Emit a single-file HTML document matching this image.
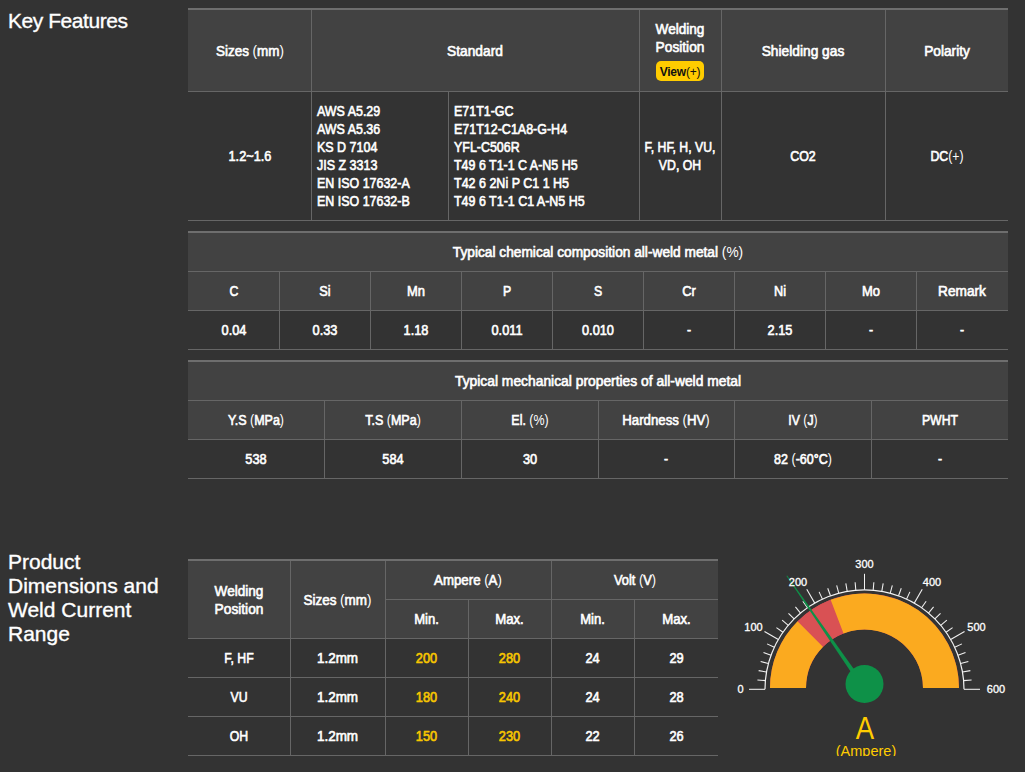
<!DOCTYPE html>
<html><head><meta charset="utf-8"><title>Key Features</title>
<style>
html,body{margin:0;padding:0;}
body{width:1025px;height:772px;background:#333333;position:relative;overflow:hidden;font-family:"Liberation Sans",sans-serif;}
.r{position:absolute;}
.t{position:absolute;white-space:nowrap;}
.lt{-webkit-text-stroke:0;}
.badge{background:#ffcc00;border-radius:5px;color:#111;font-weight:bold;font-size:12px;line-height:20px;text-align:center;}
</style></head><body>
<div class="t" style="left:8.00px;top:10.22px;font-size:21px;line-height:21px;font-weight:normal;color:#ffffff;letter-spacing:-0.45px;-webkit-text-stroke:0.35px #fff;">Key Features</div><div class="t" style="left:8.00px;top:550.72px;font-size:21px;line-height:21px;font-weight:normal;color:#ffffff;-webkit-text-stroke:0.35px #fff;">Product</div><div class="t" style="left:8.00px;top:574.72px;font-size:21px;line-height:21px;font-weight:normal;color:#ffffff;-webkit-text-stroke:0.35px #fff;">Dimensions and</div><div class="t" style="left:8.00px;top:598.72px;font-size:21px;line-height:21px;font-weight:normal;color:#ffffff;-webkit-text-stroke:0.35px #fff;">Weld Current</div><div class="t" style="left:8.00px;top:622.72px;font-size:21px;line-height:21px;font-weight:normal;color:#ffffff;-webkit-text-stroke:0.35px #fff;">Range</div><div class="r" style="left:188px;top:8px;width:820px;height:83px;background:#424242"></div><div class="r" style="left:188px;top:8px;width:820px;height:2px;background:#6e6e6e"></div><div class="r" style="left:188px;top:91px;width:820px;height:1px;background:#666666"></div><div class="r" style="left:188px;top:220px;width:820px;height:1px;background:#666666"></div><div class="r" style="left:311px;top:10px;width:1px;height:210px;background:#666666"></div><div class="r" style="left:639px;top:10px;width:1px;height:210px;background:#666666"></div><div class="r" style="left:721px;top:10px;width:1px;height:210px;background:#666666"></div><div class="r" style="left:885px;top:10px;width:1px;height:210px;background:#666666"></div><div class="r" style="left:448px;top:92px;width:1px;height:128px;background:#666666"></div><div class="t" style="left:189.50px;width:120px;text-align:center;top:45.27px;font-size:13.5px;line-height:13.5px;font-weight:normal;color:#ffffff;-webkit-text-stroke:0.6px #ffffff;transform:scale(0.9980,1.04);transform-origin:50% 11.43px;">Sizes <span class="lt">(</span>mm<span class="lt">)</span></div><div class="t" style="left:325.00px;width:300px;text-align:center;top:45.27px;font-size:13.5px;line-height:13.5px;font-weight:normal;color:#ffffff;-webkit-text-stroke:0.6px #ffffff;transform:scale(1.0189,1.04);transform-origin:50% 11.43px;">Standard</div><div class="t" style="left:640.00px;width:80px;text-align:center;top:22.77px;font-size:13.5px;line-height:13.5px;font-weight:normal;color:#ffffff;-webkit-text-stroke:0.6px #ffffff;transform:scale(1.0061,1.04);transform-origin:50% 11.43px;">Welding</div><div class="t" style="left:640.00px;width:80px;text-align:center;top:40.77px;font-size:13.5px;line-height:13.5px;font-weight:normal;color:#ffffff;-webkit-text-stroke:0.6px #ffffff;transform:scale(1.0158,1.04);transform-origin:50% 11.43px;">Position</div><div class="r badge" style="left:656px;top:61px;width:48px;height:20px;"><span style="position:relative;top:1px;letter-spacing:-0.2px">View<span style="font-weight:normal">(+)</span></span></div><div class="t" style="left:723.00px;width:160px;text-align:center;top:45.27px;font-size:13.5px;line-height:13.5px;font-weight:normal;color:#ffffff;-webkit-text-stroke:0.6px #ffffff;transform:scale(1.0193,1.04);transform-origin:50% 11.43px;">Shielding gas</div><div class="t" style="left:886.50px;width:120px;text-align:center;top:45.27px;font-size:13.5px;line-height:13.5px;font-weight:normal;color:#ffffff;-webkit-text-stroke:0.6px #ffffff;transform:scale(1.0142,1.04);transform-origin:50% 11.43px;">Polarity</div><div class="t" style="left:189.50px;width:120px;text-align:center;top:150.27px;font-size:13.5px;line-height:13.5px;font-weight:normal;color:#ffffff;-webkit-text-stroke:0.6px #ffffff;transform:scale(0.9453,1.04);transform-origin:50% 11.43px;">1.2~1.6</div><div class="t" style="left:317.00px;top:104.97px;font-size:13.5px;line-height:13.5px;font-weight:normal;color:#ffffff;-webkit-text-stroke:0.6px #ffffff;transform:scale(0.9221,1.04);transform-origin:0 11.43px;">AWS A5.29</div><div class="t" style="left:317.00px;top:122.97px;font-size:13.5px;line-height:13.5px;font-weight:normal;color:#ffffff;-webkit-text-stroke:0.6px #ffffff;transform:scale(0.9221,1.04);transform-origin:0 11.43px;">AWS A5.36</div><div class="t" style="left:317.00px;top:140.97px;font-size:13.5px;line-height:13.5px;font-weight:normal;color:#ffffff;-webkit-text-stroke:0.6px #ffffff;transform:scale(0.9244,1.04);transform-origin:0 11.43px;">KS D 7104</div><div class="t" style="left:317.00px;top:158.97px;font-size:13.5px;line-height:13.5px;font-weight:normal;color:#ffffff;-webkit-text-stroke:0.6px #ffffff;transform:scale(0.9244,1.04);transform-origin:0 11.43px;">JIS Z 3313</div><div class="t" style="left:317.00px;top:176.97px;font-size:13.5px;line-height:13.5px;font-weight:normal;color:#ffffff;-webkit-text-stroke:0.6px #ffffff;transform:scale(0.9217,1.04);transform-origin:0 11.43px;">EN ISO 17632-A</div><div class="t" style="left:317.00px;top:194.97px;font-size:13.5px;line-height:13.5px;font-weight:normal;color:#ffffff;-webkit-text-stroke:0.6px #ffffff;transform:scale(0.9217,1.04);transform-origin:0 11.43px;">EN ISO 17632-B</div><div class="t" style="left:453.80px;top:104.97px;font-size:13.5px;line-height:13.5px;font-weight:normal;color:#ffffff;-webkit-text-stroke:0.6px #ffffff;transform:scale(0.9216,1.04);transform-origin:0 11.43px;">E71T1-GC</div><div class="t" style="left:453.80px;top:122.97px;font-size:13.5px;line-height:13.5px;font-weight:normal;color:#ffffff;-webkit-text-stroke:0.6px #ffffff;transform:scale(0.9246,1.04);transform-origin:0 11.43px;">E71T12-C1A8-G-H4</div><div class="t" style="left:453.80px;top:140.97px;font-size:13.5px;line-height:13.5px;font-weight:normal;color:#ffffff;-webkit-text-stroke:0.6px #ffffff;transform:scale(0.9204,1.04);transform-origin:0 11.43px;">YFL-C506R</div><div class="t" style="left:453.80px;top:158.97px;font-size:13.5px;line-height:13.5px;font-weight:normal;color:#ffffff;-webkit-text-stroke:0.6px #ffffff;transform:scale(0.9216,1.04);transform-origin:0 11.43px;">T49 6 T1-1 C A-N5 H5</div><div class="t" style="left:453.80px;top:176.97px;font-size:13.5px;line-height:13.5px;font-weight:normal;color:#ffffff;-webkit-text-stroke:0.6px #ffffff;transform:scale(0.9255,1.04);transform-origin:0 11.43px;">T42 6 2Ni P C1 1 H5</div><div class="t" style="left:453.80px;top:194.97px;font-size:13.5px;line-height:13.5px;font-weight:normal;color:#ffffff;-webkit-text-stroke:0.6px #ffffff;transform:scale(0.9228,1.04);transform-origin:0 11.43px;">T49 6 T1-1 C1 A-N5 H5</div><div class="t" style="left:639.00px;width:82px;text-align:center;top:141.27px;font-size:13.5px;line-height:13.5px;font-weight:normal;color:#ffffff;-webkit-text-stroke:0.6px #ffffff;transform:scale(0.9074,1.04);transform-origin:50% 11.43px;">F, HF, H, VU,</div><div class="t" style="left:639.00px;width:82px;text-align:center;top:159.27px;font-size:13.5px;line-height:13.5px;font-weight:normal;color:#ffffff;-webkit-text-stroke:0.6px #ffffff;transform:scale(0.9081,1.04);transform-origin:50% 11.43px;">VD, OH</div><div class="t" style="left:723.00px;width:160px;text-align:center;top:150.27px;font-size:13.5px;line-height:13.5px;font-weight:normal;color:#ffffff;-webkit-text-stroke:0.6px #ffffff;transform:scale(0.9188,1.04);transform-origin:50% 11.43px;">CO2</div><div class="t" style="left:886.50px;width:120px;text-align:center;top:150.27px;font-size:13.5px;line-height:13.5px;font-weight:normal;color:#ffffff;-webkit-text-stroke:0.6px #ffffff;transform:scale(0.9089,1.04);transform-origin:50% 11.43px;">DC<span class="lt">(</span><span class="lt">+</span><span class="lt">)</span></div><div class="r" style="left:188px;top:231px;width:820px;height:79px;background:#424242"></div><div class="r" style="left:188px;top:231px;width:820px;height:2px;background:#6e6e6e"></div><div class="r" style="left:188px;top:271px;width:820px;height:1px;background:#666666"></div><div class="r" style="left:188px;top:310px;width:820px;height:1px;background:#666666"></div><div class="r" style="left:188px;top:349px;width:820px;height:1px;background:#666666"></div><div class="r" style="left:279px;top:272px;width:1px;height:77px;background:#666666"></div><div class="r" style="left:370px;top:272px;width:1px;height:77px;background:#666666"></div><div class="r" style="left:461px;top:272px;width:1px;height:77px;background:#666666"></div><div class="r" style="left:552px;top:272px;width:1px;height:77px;background:#666666"></div><div class="r" style="left:643px;top:272px;width:1px;height:77px;background:#666666"></div><div class="r" style="left:734px;top:272px;width:1px;height:77px;background:#666666"></div><div class="r" style="left:825px;top:272px;width:1px;height:77px;background:#666666"></div><div class="r" style="left:916px;top:272px;width:1px;height:77px;background:#666666"></div><div class="t" style="left:298.00px;width:600px;text-align:center;top:245.57px;font-size:13.5px;line-height:13.5px;font-weight:normal;color:#ffffff;-webkit-text-stroke:0.6px #ffffff;transform:scale(1.0157,1.04);transform-origin:50% 11.43px;">Typical chemical composition all-weld metal <span class="lt">(</span><span class="lt">%</span><span class="lt">)</span></div><div class="t" style="left:188.56px;width:90px;text-align:center;top:284.77px;font-size:13.5px;line-height:13.5px;font-weight:normal;color:#ffffff;-webkit-text-stroke:0.6px #ffffff;transform:scale(0.9089,1.04);transform-origin:50% 11.43px;">C</div><div class="t" style="left:188.56px;width:90px;text-align:center;top:323.77px;font-size:13.5px;line-height:13.5px;font-weight:normal;color:#ffffff;-webkit-text-stroke:0.6px #ffffff;transform:scale(0.9453,1.04);transform-origin:50% 11.43px;">0.04</div><div class="t" style="left:279.67px;width:90px;text-align:center;top:284.77px;font-size:13.5px;line-height:13.5px;font-weight:normal;color:#ffffff;-webkit-text-stroke:0.6px #ffffff;transform:scale(0.9418,1.04);transform-origin:50% 11.43px;">Si</div><div class="t" style="left:279.67px;width:90px;text-align:center;top:323.77px;font-size:13.5px;line-height:13.5px;font-weight:normal;color:#ffffff;-webkit-text-stroke:0.6px #ffffff;transform:scale(0.9453,1.04);transform-origin:50% 11.43px;">0.33</div><div class="t" style="left:370.78px;width:90px;text-align:center;top:284.77px;font-size:13.5px;line-height:13.5px;font-weight:normal;color:#ffffff;-webkit-text-stroke:0.6px #ffffff;transform:scale(0.9616,1.04);transform-origin:50% 11.43px;">Mn</div><div class="t" style="left:370.78px;width:90px;text-align:center;top:323.77px;font-size:13.5px;line-height:13.5px;font-weight:normal;color:#ffffff;-webkit-text-stroke:0.6px #ffffff;transform:scale(0.9453,1.04);transform-origin:50% 11.43px;">1.18</div><div class="t" style="left:461.89px;width:90px;text-align:center;top:284.77px;font-size:13.5px;line-height:13.5px;font-weight:normal;color:#ffffff;-webkit-text-stroke:0.6px #ffffff;transform:scale(0.9089,1.04);transform-origin:50% 11.43px;">P</div><div class="t" style="left:461.89px;width:90px;text-align:center;top:323.77px;font-size:13.5px;line-height:13.5px;font-weight:normal;color:#ffffff;-webkit-text-stroke:0.6px #ffffff;transform:scale(0.9453,1.04);transform-origin:50% 11.43px;">0.011</div><div class="t" style="left:553.00px;width:90px;text-align:center;top:284.77px;font-size:13.5px;line-height:13.5px;font-weight:normal;color:#ffffff;-webkit-text-stroke:0.6px #ffffff;transform:scale(0.9089,1.04);transform-origin:50% 11.43px;">S</div><div class="t" style="left:553.00px;width:90px;text-align:center;top:323.77px;font-size:13.5px;line-height:13.5px;font-weight:normal;color:#ffffff;-webkit-text-stroke:0.6px #ffffff;transform:scale(0.9453,1.04);transform-origin:50% 11.43px;">0.010</div><div class="t" style="left:644.11px;width:90px;text-align:center;top:284.77px;font-size:13.5px;line-height:13.5px;font-weight:normal;color:#ffffff;-webkit-text-stroke:0.6px #ffffff;transform:scale(0.9505,1.04);transform-origin:50% 11.43px;">Cr</div><div class="t" style="left:644.11px;width:90px;text-align:center;top:323.77px;font-size:13.5px;line-height:13.5px;font-weight:normal;color:#ffffff;-webkit-text-stroke:0.6px #ffffff;transform:scale(0.9089,1.04);transform-origin:50% 11.43px;">-</div><div class="t" style="left:735.22px;width:90px;text-align:center;top:284.77px;font-size:13.5px;line-height:13.5px;font-weight:normal;color:#ffffff;-webkit-text-stroke:0.6px #ffffff;transform:scale(0.9399,1.04);transform-origin:50% 11.43px;">Ni</div><div class="t" style="left:735.22px;width:90px;text-align:center;top:323.77px;font-size:13.5px;line-height:13.5px;font-weight:normal;color:#ffffff;-webkit-text-stroke:0.6px #ffffff;transform:scale(0.9453,1.04);transform-origin:50% 11.43px;">2.15</div><div class="t" style="left:826.33px;width:90px;text-align:center;top:284.77px;font-size:13.5px;line-height:13.5px;font-weight:normal;color:#ffffff;-webkit-text-stroke:0.6px #ffffff;transform:scale(0.9616,1.04);transform-origin:50% 11.43px;">Mo</div><div class="t" style="left:826.33px;width:90px;text-align:center;top:323.77px;font-size:13.5px;line-height:13.5px;font-weight:normal;color:#ffffff;-webkit-text-stroke:0.6px #ffffff;transform:scale(0.9089,1.04);transform-origin:50% 11.43px;">-</div><div class="t" style="left:917.44px;width:90px;text-align:center;top:284.77px;font-size:13.5px;line-height:13.5px;font-weight:normal;color:#ffffff;-webkit-text-stroke:0.6px #ffffff;transform:scale(1.0133,1.04);transform-origin:50% 11.43px;">Remark</div><div class="t" style="left:917.44px;width:90px;text-align:center;top:323.77px;font-size:13.5px;line-height:13.5px;font-weight:normal;color:#ffffff;-webkit-text-stroke:0.6px #ffffff;transform:scale(0.9089,1.04);transform-origin:50% 11.43px;">-</div><div class="r" style="left:188px;top:360px;width:820px;height:79px;background:#424242"></div><div class="r" style="left:188px;top:360px;width:820px;height:2px;background:#6e6e6e"></div><div class="r" style="left:188px;top:400px;width:820px;height:1px;background:#666666"></div><div class="r" style="left:188px;top:439px;width:820px;height:1px;background:#666666"></div><div class="r" style="left:188px;top:478px;width:820px;height:1px;background:#666666"></div><div class="r" style="left:324px;top:401px;width:1px;height:77px;background:#666666"></div><div class="r" style="left:461px;top:401px;width:1px;height:77px;background:#666666"></div><div class="r" style="left:598px;top:401px;width:1px;height:77px;background:#666666"></div><div class="r" style="left:734px;top:401px;width:1px;height:77px;background:#666666"></div><div class="r" style="left:871px;top:401px;width:1px;height:77px;background:#666666"></div><div class="t" style="left:298.00px;width:600px;text-align:center;top:375.27px;font-size:13.5px;line-height:13.5px;font-weight:normal;color:#ffffff;-webkit-text-stroke:0.6px #ffffff;transform:scale(1.0249,1.04);transform-origin:50% 11.43px;">Typical mechanical properties of all-weld metal</div><div class="t" style="left:188.33px;width:136px;text-align:center;top:413.77px;font-size:13.5px;line-height:13.5px;font-weight:normal;color:#ffffff;-webkit-text-stroke:0.6px #ffffff;transform:scale(0.9263,1.04);transform-origin:50% 11.43px;">Y.S <span class="lt">(</span>MPa<span class="lt">)</span></div><div class="t" style="left:188.33px;width:136px;text-align:center;top:452.77px;font-size:13.5px;line-height:13.5px;font-weight:normal;color:#ffffff;-webkit-text-stroke:0.6px #ffffff;transform:scale(0.9453,1.04);transform-origin:50% 11.43px;">538</div><div class="t" style="left:325.00px;width:136px;text-align:center;top:413.77px;font-size:13.5px;line-height:13.5px;font-weight:normal;color:#ffffff;-webkit-text-stroke:0.6px #ffffff;transform:scale(0.9265,1.04);transform-origin:50% 11.43px;">T.S <span class="lt">(</span>MPa<span class="lt">)</span></div><div class="t" style="left:325.00px;width:136px;text-align:center;top:452.77px;font-size:13.5px;line-height:13.5px;font-weight:normal;color:#ffffff;-webkit-text-stroke:0.6px #ffffff;transform:scale(0.9453,1.04);transform-origin:50% 11.43px;">584</div><div class="t" style="left:461.67px;width:136px;text-align:center;top:413.77px;font-size:13.5px;line-height:13.5px;font-weight:normal;color:#ffffff;-webkit-text-stroke:0.6px #ffffff;transform:scale(0.9210,1.04);transform-origin:50% 11.43px;">El. <span class="lt">(</span><span class="lt">%</span><span class="lt">)</span></div><div class="t" style="left:461.67px;width:136px;text-align:center;top:452.77px;font-size:13.5px;line-height:13.5px;font-weight:normal;color:#ffffff;-webkit-text-stroke:0.6px #ffffff;transform:scale(0.9453,1.04);transform-origin:50% 11.43px;">30</div><div class="t" style="left:598.33px;width:136px;text-align:center;top:413.77px;font-size:13.5px;line-height:13.5px;font-weight:normal;color:#ffffff;-webkit-text-stroke:0.6px #ffffff;transform:scale(0.9792,1.04);transform-origin:50% 11.43px;">Hardness <span class="lt">(</span>HV<span class="lt">)</span></div><div class="t" style="left:598.33px;width:136px;text-align:center;top:452.77px;font-size:13.5px;line-height:13.5px;font-weight:normal;color:#ffffff;-webkit-text-stroke:0.6px #ffffff;transform:scale(0.9089,1.04);transform-origin:50% 11.43px;">-</div><div class="t" style="left:735.00px;width:136px;text-align:center;top:413.77px;font-size:13.5px;line-height:13.5px;font-weight:normal;color:#ffffff;-webkit-text-stroke:0.6px #ffffff;transform:scale(0.9077,1.04);transform-origin:50% 11.43px;">IV <span class="lt">(</span>J<span class="lt">)</span></div><div class="t" style="left:735.00px;width:136px;text-align:center;top:452.77px;font-size:13.5px;line-height:13.5px;font-weight:normal;color:#ffffff;-webkit-text-stroke:0.6px #ffffff;transform:scale(0.9258,1.04);transform-origin:50% 11.43px;">82 <span class="lt">(</span>-60°C<span class="lt">)</span></div><div class="t" style="left:871.67px;width:136px;text-align:center;top:413.77px;font-size:13.5px;line-height:13.5px;font-weight:normal;color:#ffffff;-webkit-text-stroke:0.6px #ffffff;transform:scale(0.9089,1.04);transform-origin:50% 11.43px;">PWHT</div><div class="t" style="left:871.67px;width:136px;text-align:center;top:452.77px;font-size:13.5px;line-height:13.5px;font-weight:normal;color:#ffffff;-webkit-text-stroke:0.6px #ffffff;transform:scale(0.9089,1.04);transform-origin:50% 11.43px;">-</div><div class="r" style="left:188px;top:559px;width:530px;height:79px;background:#424242"></div><div class="r" style="left:188px;top:559px;width:530px;height:2px;background:#6e6e6e"></div><div class="r" style="left:385px;top:599px;width:333px;height:1px;background:#666666"></div><div class="r" style="left:188px;top:638px;width:530px;height:1px;background:#666666"></div><div class="r" style="left:188px;top:677px;width:530px;height:1px;background:#666666"></div><div class="r" style="left:188px;top:716px;width:530px;height:1px;background:#666666"></div><div class="r" style="left:188px;top:755px;width:530px;height:1px;background:#666666"></div><div class="r" style="left:290px;top:561px;width:1px;height:194px;background:#666666"></div><div class="r" style="left:385px;top:561px;width:1px;height:194px;background:#666666"></div><div class="r" style="left:551px;top:561px;width:1px;height:194px;background:#666666"></div><div class="r" style="left:468px;top:600px;width:1px;height:155px;background:#666666"></div><div class="r" style="left:634px;top:600px;width:1px;height:155px;background:#666666"></div><div class="t" style="left:189.00px;width:100px;text-align:center;top:585.07px;font-size:13.5px;line-height:13.5px;font-weight:normal;color:#ffffff;-webkit-text-stroke:0.6px #ffffff;transform:scale(1.0061,1.04);transform-origin:50% 11.43px;">Welding</div><div class="t" style="left:189.00px;width:100px;text-align:center;top:603.07px;font-size:13.5px;line-height:13.5px;font-weight:normal;color:#ffffff;-webkit-text-stroke:0.6px #ffffff;transform:scale(1.0158,1.04);transform-origin:50% 11.43px;">Position</div><div class="t" style="left:290.00px;width:95px;text-align:center;top:594.27px;font-size:13.5px;line-height:13.5px;font-weight:normal;color:#ffffff;-webkit-text-stroke:0.6px #ffffff;transform:scale(0.9980,1.04);transform-origin:50% 11.43px;">Sizes <span class="lt">(</span>mm<span class="lt">)</span></div><div class="t" style="left:385.00px;width:166px;text-align:center;top:574.27px;font-size:13.5px;line-height:13.5px;font-weight:normal;color:#ffffff;-webkit-text-stroke:0.6px #ffffff;transform:scale(0.9813,1.04);transform-origin:50% 11.43px;">Ampere <span class="lt">(</span>A<span class="lt">)</span></div><div class="t" style="left:551.50px;width:166px;text-align:center;top:574.27px;font-size:13.5px;line-height:13.5px;font-weight:normal;color:#ffffff;-webkit-text-stroke:0.6px #ffffff;transform:scale(0.9497,1.04);transform-origin:50% 11.43px;">Volt <span class="lt">(</span>V<span class="lt">)</span></div><div class="t" style="left:385.00px;width:83px;text-align:center;top:613.27px;font-size:13.5px;line-height:13.5px;font-weight:normal;color:#ffffff;-webkit-text-stroke:0.6px #ffffff;transform:scale(0.9685,1.04);transform-origin:50% 11.43px;">Min.</div><div class="t" style="left:468.00px;width:83px;text-align:center;top:613.27px;font-size:13.5px;line-height:13.5px;font-weight:normal;color:#ffffff;-webkit-text-stroke:0.6px #ffffff;transform:scale(0.9777,1.04);transform-origin:50% 11.43px;">Max.</div><div class="t" style="left:551.00px;width:83px;text-align:center;top:613.27px;font-size:13.5px;line-height:13.5px;font-weight:normal;color:#ffffff;-webkit-text-stroke:0.6px #ffffff;transform:scale(0.9685,1.04);transform-origin:50% 11.43px;">Min.</div><div class="t" style="left:634.50px;width:83px;text-align:center;top:613.27px;font-size:13.5px;line-height:13.5px;font-weight:normal;color:#ffffff;-webkit-text-stroke:0.6px #ffffff;transform:scale(0.9777,1.04);transform-origin:50% 11.43px;">Max.</div><div class="t" style="left:189.00px;width:100px;text-align:center;top:651.97px;font-size:13.5px;line-height:13.5px;font-weight:normal;color:#ffffff;-webkit-text-stroke:0.6px #ffffff;transform:scale(0.9077,1.04);transform-origin:50% 11.43px;">F, HF</div><div class="t" style="left:290.00px;width:95px;text-align:center;top:651.97px;font-size:13.5px;line-height:13.5px;font-weight:normal;color:#ffffff;-webkit-text-stroke:0.6px #ffffff;transform:scale(0.9972,1.04);transform-origin:50% 11.43px;">1.2mm</div><div class="t" style="left:385.00px;width:83px;text-align:center;top:651.97px;font-size:13.5px;line-height:13.5px;font-weight:normal;color:#f7c600;-webkit-text-stroke:0.6px #f7c600;transform:scale(0.9453,1.04);transform-origin:50% 11.43px;">200</div><div class="t" style="left:468.00px;width:83px;text-align:center;top:651.97px;font-size:13.5px;line-height:13.5px;font-weight:normal;color:#f7c600;-webkit-text-stroke:0.6px #f7c600;transform:scale(0.9453,1.04);transform-origin:50% 11.43px;">280</div><div class="t" style="left:551.00px;width:83px;text-align:center;top:651.97px;font-size:13.5px;line-height:13.5px;font-weight:normal;color:#ffffff;-webkit-text-stroke:0.6px #ffffff;transform:scale(0.9453,1.04);transform-origin:50% 11.43px;">24</div><div class="t" style="left:634.50px;width:83px;text-align:center;top:651.97px;font-size:13.5px;line-height:13.5px;font-weight:normal;color:#ffffff;-webkit-text-stroke:0.6px #ffffff;transform:scale(0.9453,1.04);transform-origin:50% 11.43px;">29</div><div class="t" style="left:189.00px;width:100px;text-align:center;top:690.97px;font-size:13.5px;line-height:13.5px;font-weight:normal;color:#ffffff;-webkit-text-stroke:0.6px #ffffff;transform:scale(0.9089,1.04);transform-origin:50% 11.43px;">VU</div><div class="t" style="left:290.00px;width:95px;text-align:center;top:690.97px;font-size:13.5px;line-height:13.5px;font-weight:normal;color:#ffffff;-webkit-text-stroke:0.6px #ffffff;transform:scale(0.9972,1.04);transform-origin:50% 11.43px;">1.2mm</div><div class="t" style="left:385.00px;width:83px;text-align:center;top:690.97px;font-size:13.5px;line-height:13.5px;font-weight:normal;color:#f7c600;-webkit-text-stroke:0.6px #f7c600;transform:scale(0.9453,1.04);transform-origin:50% 11.43px;">180</div><div class="t" style="left:468.00px;width:83px;text-align:center;top:690.97px;font-size:13.5px;line-height:13.5px;font-weight:normal;color:#f7c600;-webkit-text-stroke:0.6px #f7c600;transform:scale(0.9453,1.04);transform-origin:50% 11.43px;">240</div><div class="t" style="left:551.00px;width:83px;text-align:center;top:690.97px;font-size:13.5px;line-height:13.5px;font-weight:normal;color:#ffffff;-webkit-text-stroke:0.6px #ffffff;transform:scale(0.9453,1.04);transform-origin:50% 11.43px;">24</div><div class="t" style="left:634.50px;width:83px;text-align:center;top:690.97px;font-size:13.5px;line-height:13.5px;font-weight:normal;color:#ffffff;-webkit-text-stroke:0.6px #ffffff;transform:scale(0.9453,1.04);transform-origin:50% 11.43px;">28</div><div class="t" style="left:189.00px;width:100px;text-align:center;top:729.97px;font-size:13.5px;line-height:13.5px;font-weight:normal;color:#ffffff;-webkit-text-stroke:0.6px #ffffff;transform:scale(0.9089,1.04);transform-origin:50% 11.43px;">OH</div><div class="t" style="left:290.00px;width:95px;text-align:center;top:729.97px;font-size:13.5px;line-height:13.5px;font-weight:normal;color:#ffffff;-webkit-text-stroke:0.6px #ffffff;transform:scale(0.9972,1.04);transform-origin:50% 11.43px;">1.2mm</div><div class="t" style="left:385.00px;width:83px;text-align:center;top:729.97px;font-size:13.5px;line-height:13.5px;font-weight:normal;color:#f7c600;-webkit-text-stroke:0.6px #f7c600;transform:scale(0.9453,1.04);transform-origin:50% 11.43px;">150</div><div class="t" style="left:468.00px;width:83px;text-align:center;top:729.97px;font-size:13.5px;line-height:13.5px;font-weight:normal;color:#f7c600;-webkit-text-stroke:0.6px #f7c600;transform:scale(0.9453,1.04);transform-origin:50% 11.43px;">230</div><div class="t" style="left:551.00px;width:83px;text-align:center;top:729.97px;font-size:13.5px;line-height:13.5px;font-weight:normal;color:#ffffff;-webkit-text-stroke:0.6px #ffffff;transform:scale(0.9453,1.04);transform-origin:50% 11.43px;">22</div><div class="t" style="left:634.50px;width:83px;text-align:center;top:729.97px;font-size:13.5px;line-height:13.5px;font-weight:normal;color:#ffffff;-webkit-text-stroke:0.6px #ffffff;transform:scale(0.9453,1.04);transform-origin:50% 11.43px;">26</div><svg class="r" style="left:0;top:0" width="1025" height="772" viewBox="0 0 1025 772"><path d="M770.00,688.00 A94.5,94.5 0 0 1 959.00,688.00 L923.00,688.00 A58.5,58.5 0 0 0 806.00,688.00 Z" fill="#d95154"/><path d="M770.00,688.00 A94.5,94.5 0 0 1 797.68,621.18 L823.13,646.63 A58.5,58.5 0 0 0 806.00,688.00 Z" fill="#fbaa1f"/><path d="M797.68,621.18 A94.5,94.5 0 0 1 830.63,599.78 L843.54,633.39 A58.5,58.5 0 0 0 823.13,646.63 Z" fill="#d95154"/><path d="M830.63,599.78 A94.5,94.5 0 0 1 959.00,688.00 L923.00,688.00 A58.5,58.5 0 0 0 843.54,633.39 Z" fill="#fbaa1f"/><path d="M765.00,689.30 A99.5,99.5 0 0 1 964.00,689.30" fill="none" stroke="#f2f2f2" stroke-width="1.2"/><line x1="765.00" y1="689.30" x2="749.00" y2="689.30" stroke="#f2f2f2" stroke-width="1.05"/><line x1="765.38" y1="680.63" x2="757.41" y2="679.93" stroke="#f2f2f2" stroke-width="1.05"/><line x1="766.51" y1="672.02" x2="758.63" y2="670.63" stroke="#f2f2f2" stroke-width="1.05"/><line x1="768.39" y1="663.55" x2="760.66" y2="661.48" stroke="#f2f2f2" stroke-width="1.05"/><line x1="771.00" y1="655.27" x2="763.48" y2="652.53" stroke="#f2f2f2" stroke-width="1.05"/><line x1="774.32" y1="647.25" x2="767.07" y2="643.87" stroke="#f2f2f2" stroke-width="1.05"/><line x1="778.33" y1="639.55" x2="764.47" y2="631.55" stroke="#f2f2f2" stroke-width="1.05"/><line x1="782.99" y1="632.23" x2="776.44" y2="627.64" stroke="#f2f2f2" stroke-width="1.05"/><line x1="788.28" y1="625.34" x2="782.15" y2="620.20" stroke="#f2f2f2" stroke-width="1.05"/><line x1="794.14" y1="618.94" x2="788.49" y2="613.29" stroke="#f2f2f2" stroke-width="1.05"/><line x1="800.54" y1="613.08" x2="795.40" y2="606.95" stroke="#f2f2f2" stroke-width="1.05"/><line x1="807.43" y1="607.79" x2="802.84" y2="601.24" stroke="#f2f2f2" stroke-width="1.05"/><line x1="814.75" y1="603.13" x2="806.75" y2="589.27" stroke="#f2f2f2" stroke-width="1.05"/><line x1="822.45" y1="599.12" x2="819.07" y2="591.87" stroke="#f2f2f2" stroke-width="1.05"/><line x1="830.47" y1="595.80" x2="827.73" y2="588.28" stroke="#f2f2f2" stroke-width="1.05"/><line x1="838.75" y1="593.19" x2="836.68" y2="585.46" stroke="#f2f2f2" stroke-width="1.05"/><line x1="847.22" y1="591.31" x2="845.83" y2="583.43" stroke="#f2f2f2" stroke-width="1.05"/><line x1="855.83" y1="590.18" x2="855.13" y2="582.21" stroke="#f2f2f2" stroke-width="1.05"/><line x1="864.50" y1="589.80" x2="864.50" y2="573.80" stroke="#f2f2f2" stroke-width="1.05"/><line x1="873.17" y1="590.18" x2="873.87" y2="582.21" stroke="#f2f2f2" stroke-width="1.05"/><line x1="881.78" y1="591.31" x2="883.17" y2="583.43" stroke="#f2f2f2" stroke-width="1.05"/><line x1="890.25" y1="593.19" x2="892.32" y2="585.46" stroke="#f2f2f2" stroke-width="1.05"/><line x1="898.53" y1="595.80" x2="901.27" y2="588.28" stroke="#f2f2f2" stroke-width="1.05"/><line x1="906.55" y1="599.12" x2="909.93" y2="591.87" stroke="#f2f2f2" stroke-width="1.05"/><line x1="914.25" y1="603.13" x2="922.25" y2="589.27" stroke="#f2f2f2" stroke-width="1.05"/><line x1="921.57" y1="607.79" x2="926.16" y2="601.24" stroke="#f2f2f2" stroke-width="1.05"/><line x1="928.46" y1="613.08" x2="933.60" y2="606.95" stroke="#f2f2f2" stroke-width="1.05"/><line x1="934.86" y1="618.94" x2="940.51" y2="613.29" stroke="#f2f2f2" stroke-width="1.05"/><line x1="940.72" y1="625.34" x2="946.85" y2="620.20" stroke="#f2f2f2" stroke-width="1.05"/><line x1="946.01" y1="632.23" x2="952.56" y2="627.64" stroke="#f2f2f2" stroke-width="1.05"/><line x1="950.67" y1="639.55" x2="964.53" y2="631.55" stroke="#f2f2f2" stroke-width="1.05"/><line x1="954.68" y1="647.25" x2="961.93" y2="643.87" stroke="#f2f2f2" stroke-width="1.05"/><line x1="958.00" y1="655.27" x2="965.52" y2="652.53" stroke="#f2f2f2" stroke-width="1.05"/><line x1="960.61" y1="663.55" x2="968.34" y2="661.48" stroke="#f2f2f2" stroke-width="1.05"/><line x1="962.49" y1="672.02" x2="970.37" y2="670.63" stroke="#f2f2f2" stroke-width="1.05"/><line x1="963.62" y1="680.63" x2="971.59" y2="679.93" stroke="#f2f2f2" stroke-width="1.05"/><line x1="964.00" y1="689.30" x2="980.00" y2="689.30" stroke="#f2f2f2" stroke-width="1.05"/><path d="M866.47,686.63 L787.12,575.55 L786.46,576.01 L862.53,689.37 Z" fill="#0e9148"/><circle cx="864.5" cy="684" r="19" fill="#0e9148"/></svg><div class="t" style="left:720.50px;width:40px;text-align:center;top:684.49px;font-size:11px;line-height:11px;font-weight:normal;color:#ffffff;-webkit-text-stroke:0.3px #fff;">0</div><div class="t" style="left:733.50px;width:40px;text-align:center;top:621.69px;font-size:11px;line-height:11px;font-weight:normal;color:#ffffff;-webkit-text-stroke:0.3px #fff;">100</div><div class="t" style="left:778.00px;width:40px;text-align:center;top:576.99px;font-size:11px;line-height:11px;font-weight:normal;color:#ffffff;-webkit-text-stroke:0.3px #fff;">200</div><div class="t" style="left:844.50px;width:40px;text-align:center;top:558.89px;font-size:11px;line-height:11px;font-weight:normal;color:#ffffff;-webkit-text-stroke:0.3px #fff;">300</div><div class="t" style="left:912.00px;width:40px;text-align:center;top:576.99px;font-size:11px;line-height:11px;font-weight:normal;color:#ffffff;-webkit-text-stroke:0.3px #fff;">400</div><div class="t" style="left:956.50px;width:40px;text-align:center;top:622.49px;font-size:11px;line-height:11px;font-weight:normal;color:#ffffff;-webkit-text-stroke:0.3px #fff;">500</div><div class="t" style="left:976.00px;width:40px;text-align:center;top:683.69px;font-size:11px;line-height:11px;font-weight:normal;color:#ffffff;-webkit-text-stroke:0.3px #fff;">600</div><div class="t" style="left:835.00px;width:60px;text-align:center;top:711.91px;font-size:32px;line-height:32px;font-weight:normal;color:#ffcc00;transform:scaleX(0.86);transform-origin:center 0;">A</div><div class="r" style="left:800px;top:740px;width:130px;height:16px;overflow:hidden"><div class="t" style="left:1.00px;width:130px;text-align:center;top:4.23px;font-size:14.5px;line-height:14.5px;font-weight:normal;color:#ffcc00;">(Ampere)</div></div>
</body></html>
